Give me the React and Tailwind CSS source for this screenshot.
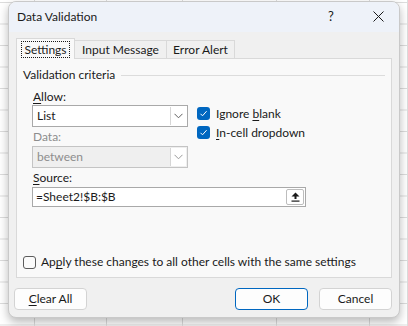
import React from 'react'

const cols = [35, 72, 76, 94, 93, 38]

const Check = ({ checked }) => (
  <span
    className={
      'w-[13px] h-[13px] rounded-[3px] flex items-center justify-center shrink-0 ' +
      (checked ? 'bg-[#0067c0]' : 'border border-[#5c5c5c] bg-[#fbfbfb]')
    }
  >
    {checked && (
      <svg width="9" height="9" viewBox="0 0 9 9" fill="none">
        <path d="M1.5 4.8 L3.5 6.8 L7.6 2.2" stroke="white" strokeWidth="1" />
      </svg>
    )}
  </span>
)

const Chevron = ({ color = '#5f5f5f' }) => (
  <svg width="9" height="6" viewBox="0 0 9 6" fill="none">
    <path d="M0.5 0.8 L4.5 4.8 L8.5 0.8" stroke={color} strokeWidth="1" />
  </svg>
)

const Combo = ({ value, disabled }) => (
  <div
    className={
      'w-[156px] h-[22px] flex border ' +
      (disabled ? 'bg-[#efefef] border-[#c4c4c4] text-[#8d8d8d]' : 'bg-white border-[#a9a9a9] text-[#1a1a1a]')
    }
  >
    <div className="flex-1 pl-[4px] leading-[20px]">{value}</div>
    <div className="w-[16px] my-[1px] mr-[1px] border-l border-[#d6d6d6] bg-white flex items-center justify-center">
      <Chevron color={disabled ? '#9a9a9a' : '#5f5f5f'} />
    </div>
  </div>
)

const Button = ({ children, primary, className = '' }) => (
  <button
    className={
      'h-[22px] w-[73px] rounded-[4px] bg-[#fdfdfd] text-[12px] text-[#1a1a1a] ' +
      (primary ? 'border border-[#0067c0]' : 'border border-[#d3d3d3]') +
      ' ' +
      className
    }
  >
    {children}
  </button>
)

export default function App() {
  return (
    <div
      className="relative w-[408px] h-[326px] overflow-hidden bg-white text-[12px] text-[#1a1a1a]"
      style={{ fontFamily: '"Segoe UI", Lato, sans-serif' }}
    >
      {/* spreadsheet grid behind the dialog */}
      <div className="absolute inset-0 flex bg-[linear-gradient(to_bottom,#dcdcdc_1px,transparent_1px)] bg-[length:100%_21.5px] bg-[position:0_2px]">
        {cols.map((w, i) => (
          <div key={i} className="h-full border-r border-[#dcdcdc]" style={{ width: w }} />
        ))}
      </div>

      {/* dialog */}
      <div className="absolute left-[8px] top-[1px] w-[392px] h-[317px] rounded-[8px] bg-[#f0f0f0] border border-[#c9c9c9] shadow-[0_4px_10px_rgba(0,0,0,0.28)] overflow-hidden flex flex-col">
        <div className="h-[30px] bg-[#eef2f9] flex items-center pl-[8px] pb-[1px] shrink-0">
          <span className="flex-1">Data Validation</span>
          <span className="w-[20px] text-center text-[13px] mr-[32px]">?</span>
          <svg width="11" height="11" viewBox="0 0 11 11" className="mr-[15px]" fill="none">
            <path d="M0.5 0.5 L10.5 10.5 M10.5 0.5 L0.5 10.5" stroke="#1a1a1a" strokeWidth="1" />
          </svg>
        </div>

        <div className="px-[7px] pt-[6px]">
          {/* tabs */}
          <div className="flex items-end h-[21px] relative z-10 -mb-[1px]">
            <div className="h-[21px] w-[59px] border border-b-0 border-[#d9d9d9] bg-[#f9f9f9] flex items-center justify-center">
              <span className="border border-dotted border-[#1a1a1a] px-[2px] leading-[15px]">Settings</span>
            </div>
            <div className="h-[19px] w-[92px] border border-l-0 border-[#d9d9d9] bg-[#f0f0f0] flex items-center justify-center">
              Input Message
            </div>
            <div className="h-[19px] w-[68px] border border-l-0 border-[#d9d9d9] bg-[#f0f0f0] flex items-center justify-center">
              Error Alert
            </div>
          </div>

          {/* panel */}
          <div className="h-[220px] border border-[#d9d9d9] bg-[#f9f9f9] flex flex-col pt-[8px]">
            <div className="flex items-center pl-[6px] pr-[6px]">
              <span className="leading-[16px]">Validation criteria</span>
              <div className="flex-1 h-px bg-[#dcdcdc] ml-[6px]" />
            </div>

            <div className="flex pl-[15px] mt-[5px]">
              <div className="flex flex-col">
                <div className="leading-[16px] pl-[1px] pt-[1px]">
                  <span className="underline underline-offset-2">A</span>llow:
                </div>
                <div className="mt-[0px]">
                  <Combo value="List" />
                </div>
                <div className="leading-[16px] pl-[1px] mt-[2px] text-[#8d8d8d]">Data:</div>
                <div className="mt-[1px]">
                  <Combo value="between" disabled />
                </div>
              </div>
              <div className="flex flex-col ml-[9px] pt-[19px] gap-[6px]">
                <div className="flex items-center gap-[6px] h-[13px]">
                  <Check checked />
                  <span>
                    Ignore <span className="underline underline-offset-2">b</span>lank
                  </span>
                </div>
                <div className="flex items-center gap-[6px] h-[13px]">
                  <Check checked />
                  <span>
                    <span className="underline underline-offset-2">I</span>n-cell dropdown
                  </span>
                </div>
              </div>
            </div>

            <div className="pl-[15px] mt-[2px]">
              <div className="leading-[16px] pl-[1px]">
                <span className="underline underline-offset-2">S</span>ource:
              </div>
              <div className="mt-[1px] w-[274px] h-[20px] bg-white border border-[#a9a9a9] flex items-center">
                <span className="flex-1 pl-[3px]">=Sheet2!$B:$B</span>
                <div className="w-[18px] h-[16px] mr-[1px] border border-[#bdbdbd] rounded-[2px] bg-white flex items-center justify-center">
                  <svg width="9" height="10" viewBox="0 0 9 10">
                    <path d="M4.5 0.5 L8.5 4.5 L5.5 4.5 L5.5 7 L3.5 7 L3.5 4.5 L0.5 4.5 Z" fill="#1a1a1a" />
                    <rect x="0.5" y="8.5" width="8" height="1.2" fill="#1a1a1a" />
                  </svg>
                </div>
              </div>
            </div>

            <div className="flex-1" />
            <div className="flex items-center gap-[5px] pl-[6px] mb-[6px]">
              <Check />
              <span>
                Ap<span className="underline underline-offset-2">p</span>ly these changes to all other cells with the same settings
              </span>
            </div>
          </div>
        </div>

        <div className="flex items-center pl-[5px] pr-[7px] mt-[10px]">
          <Button>
            <span className="underline underline-offset-2">C</span>lear All
          </Button>
          <div className="flex-1" />
          <Button primary>OK</Button>
          <Button className="ml-[11px]">Cancel</Button>
        </div>
      </div>
    </div>
  )
}
